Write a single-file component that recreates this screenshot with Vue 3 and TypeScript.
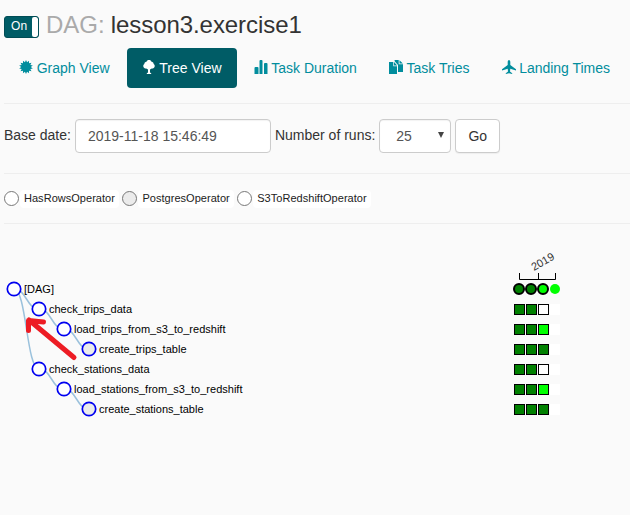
<script setup lang="ts">
interface TreeNode { x: number; y: number; label: string; fill: string; width: number }

const operators = [
  { name: 'HasRowsOperator', color: '#fff' },
  { name: 'PostgresOperator', color: '#ebebeb' },
  { name: 'S3ToRedshiftOperator', color: '#fff' },
]

const nodes: TreeNode[] = [
  { x: 14, y: 0, label: '[DAG]', fill: '#fff', width: 30 },
  { x: 39, y: 20, label: 'check_trips_data', fill: '#fff', width: 83 },
  { x: 64, y: 40, label: 'load_trips_from_s3_to_redshift', fill: '#fff', width: 151.5 },
  { x: 89, y: 60, label: 'create_trips_table', fill: '#ebebeb', width: 87.5 },
  { x: 39, y: 80, label: 'check_stations_data', fill: '#fff', width: 100.5 },
  { x: 64, y: 100, label: 'load_stations_from_s3_to_redshift', fill: '#fff', width: 168.5 },
  { x: 89, y: 120, label: 'create_stations_table', fill: '#ebebeb', width: 104.500 },
]
const edges = [[0, 1], [1, 2], [2, 3], [0, 4], [4, 5], [5, 6]]

function edgePath([a, b]: number[]): string {
  const s = nodes[a]
  const t = nodes[b]
  const mid = (s.x + t.x) / 2
  return `M${s.x},${s.y}C${mid},${s.y} ${mid},${t.y} ${t.x},${t.y}`
}

function burst(points: number): string {
  const out: string[] = []
  for (let i = 0; i < points * 2; i++) {
    const r = i % 2 ? 4.8 : 7
    const a = (i * Math.PI) / points
    out.push(`${(7 + r * Math.sin(a)).toFixed(2)},${(7 - r * Math.cos(a)).toFixed(2)}`)
  }
  return out.join(' ')
}

const success = '#008000'
const running = '#00ff00'
const runs = [
  [success, success, '#fff'],
  [success, success, running],
  [success, success, success],
  [success, success, '#fff'],
  [success, success, running],
  [success, success, success],
]
</script>

<template>
  <main class="page">
    <h3 class="title">
      <span class="toggle"><span class="toggle-on">On</span><span class="toggle-handle"></span></span>
      <span class="prefix">DAG:</span>
      <span class="name">lesson3.exercise1</span>
    </h3>

    <nav class="tabs">
      <a class="tab">
        <svg class="icon" viewBox="0 0 14 14"><polygon :points="burst(14)" /></svg>
        Graph View
      </a>
      <a class="tab active">
        <svg class="icon" viewBox="0 0 14 14"><path d="M7 0C8.300 0 9.200.7 9.500 1.700c1.300.1 2.200 1 2.100 2.200 1 .6 1.400 1.700 1 2.800-.4 1.300-1.600 2-2.800 1.800L8 9.500V12.500l1.200.8v.7H4.800v-.7l1.200-.8V9.500L4.200 8.500C3 8.700 1.800 8 1.400 6.700 1 5.600 1.400 4.500 2.400 3.900 2.300 2.700 3.200 1.800 4.500 1.700 4.800.7 5.700 0 7 0z" /></svg>
        Tree View
      </a>
      <a class="tab">
        <svg class="icon" viewBox="0 0 14 14"><path d="M.5 8q0-1 1-1h2q1 0 1 1v6h-4zM5.500 1q0-1 1-1h1q1 0 1 1v13h-3zM10 4q0-1 1-1h1.500q1 0 1 1v10H10z" /></svg>
        Task Duration
      </a>
      <a class="tab">
        <svg class="icon" viewBox="0 0 14 14"><path d="M0 2h4.300v4.200H8V14H0zM5 2.100L8.200 5.400H5zM5.500 0h4.200v4.200H14V12H9V5L5.800 1.500zM10.500.2L13.900 3.500H10.500z" /></svg>
        Task Tries
      </a>
      <a class="tab landing">
        <svg class="icon" viewBox="0 0 14 14"><path d="M7 0c.8 0 1.300 1 1.300 2v3L14 9.200v1.300L8.300 8.800 8 11.500l2.200 1.700v.8L7 13.300 3.800 14v-.8L6 11.500l-.3-2.700L0 10.500V9.200L5.700 5V2C5.700 1 6.200 0 7 0z" /></svg>
        Landing Times
      </a>
    </nav>

    <form class="filters" @submit.prevent>
      <span class="label">Base date:</span>
      <span class="field date">2019-11-18 15:46:49</span>
      <span class="label">Number of runs:</span>
      <span class="field runs">25 <svg class="caret" viewBox="0 0 6 6"><path d="M0 0h6L3 6z" /></svg></span>
      <button class="field go" type="button">Go</button>
    </form>

    <section class="legend">
      <span v-for="op in operators" :key="op.name" class="operator">
        <svg class="dot" viewBox="0 0 15 15"><circle cx="7.500" cy="7.500" r="7" :fill="op.color" stroke="#777" /></svg>
        <span class="operator-name">{{ op.name }}</span>
      </span>
    </section>

    <svg class="tree" width="630" height="291" viewBox="0 224 630 291">
      <g transform="translate(0,289)">
        <path v-for="(e, i) in edges" :key="i" class="link" :d="edgePath(e)" />
        <g v-for="n in nodes" :key="n.label" :transform="`translate(${n.x},${n.y})`">
          <circle class="node" r="6.700" :fill="n.fill" />
          <text x="10" y="4" :textLength="n.width">{{ n.label }}</text>
        </g>
      </g>
      <path class="axis" d="M519.500 273v6.500h36V273M538.500 273v6" />
      <text class="year" transform="translate(534,271) rotate(-30)">2019</text>
      <g class="state">
        <circle cx="519" cy="289" r="5" :fill="success" />
        <circle cx="531" cy="289" r="5" :fill="success" />
        <circle cx="543" cy="289" r="5" :fill="running" />
      </g>
      <circle cx="555" cy="289" r="5" :fill="running" />
      <g v-for="(row, r) in runs" :key="r" :transform="`translate(514,${304 + r * 20})`">
        <rect x="36" width="10" height="11" fill="#fff" />
        <rect v-for="(c, i) in row" :key="i" class="cell" :x="i * 12 + 0.5" y="0.5" width="10" height="10" :fill="c" />
      </g>
      <path class="arrow" d="M74 357.500L29 320M43.500 322L28.500 320.500V330.500" />
    </svg>
  </main>
</template>

<style>
body { background: #fafafa; }
</style>

<style scoped>
.page { box-sizing: border-box; width: 630px; height: 515px; overflow: hidden; background: #fafafa; color: #333; font: 14px/20px "Liberation Sans", Arial, sans-serif; }
.title { display: flex; align-items: center; box-sizing: border-box; height: 48px; margin: 0; padding: 2px 0 0 4px; font-size: 24px; font-weight: 400; white-space: pre; }
.prefix { margin: 0 6px 0 7px; color: #aaa; }
.name { letter-spacing: -0.06px; }
.toggle { box-sizing: border-box; display: flex; width: 35px; height: 22px; margin-top: 4px; overflow: hidden; border: 1px solid #004c55; border-radius: 3px; background: #005c66; color: #fff; font-size: 12px; }
.toggle-on { width: 27px; padding-left: 1px; text-align: center; line-height: 19px; }
.toggle-handle { width: 6px; border-radius: 2px; background: #fff; }
.tabs { display: flex; gap: 2px; padding-left: 4px; height: 40px; }
.tab { display: flex; gap: 3.700px; padding: 10px 15px; border-radius: 4px; color: #018d9d; white-space: nowrap; }
.tab.active { background: #005c66; color: #fff; }
.landing { letter-spacing: -0.02px; }
.icon { flex: none; width: 14px; height: 14px; margin-top: 2px; fill: currentColor; }
.filters { display: flex; align-items: flex-start; gap: 4px; box-sizing: border-box; height: 70px; margin: 15px 0 0 4px; padding-top: 15px; border-top: 1px solid #eee; }
.label { padding-top: 6px; white-space: nowrap; }
.field { box-sizing: border-box; height: 34px; border: 1px solid #ccc; border-radius: 4px; padding: 6px 12px; background: #fff; color: #555; font: 14px/20px "Liberation Sans", Arial, sans-serif; box-shadow: inset 0 1px 1px rgba(0, 0, 0, 0.05); white-space: nowrap; }
.date { width: 196px; }
.runs { display: flex; align-items: center; justify-content: space-between; width: 72px; padding: 0 6px 0 16px; }
.caret { width: 6px; height: 6px; margin-top: -2px; fill: #444; }
.go { width: 45px; color: #333; box-shadow: 0 1px 1px rgba(0, 0, 0, 0.05); }
.legend { display: flex; align-items: center; gap: 3px; box-sizing: border-box; height: 51px; margin-left: 4px; border-top: 1px solid #eee; border-bottom: 1px solid #eee; font-size: 11px; }
.operator { display: flex; align-items: center; gap: 1px; }
.dot { width: 15px; height: 15px; }
.operator-name { padding: 0 4.500px 1px 4px; border-radius: 4px; background: #fff; color: #222; line-height: 17px; letter-spacing: 0.03px; }
.tree { display: block; font-size: 11px; }
.tree text { fill: #000; }
.link { fill: none; stroke: #9ac1dc; stroke-width: 1.5; }
.node { stroke: #0000f0; stroke-width: 1.7; }
.axis { fill: none; stroke: #000; }
.tree .year { fill: #333; }
.state { stroke: #000; stroke-width: 2; }
.cell { stroke: #000; stroke-width: 1; }
.arrow { fill: none; stroke: #ed1c24; stroke-width: 5; stroke-linecap: round; stroke-linejoin: round; }
</style>
